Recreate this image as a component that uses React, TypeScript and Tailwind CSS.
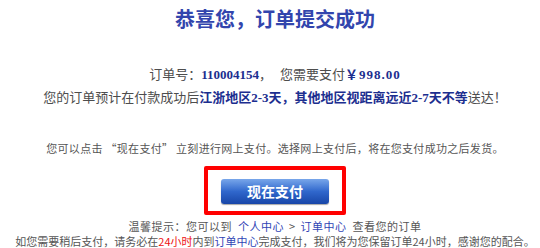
export default function App() {
  const cjk = { fontFamily: '"Noto Sans CJK SC", sans-serif' };

  return (
    <div className="w-[540px] h-[248px] bg-white overflow-hidden pl-[10px] text-center" style={cjk}>
      <h1 className="mt-[9px] text-[20px] leading-[20px] font-bold text-[#3245ad]">
        恭喜您，订单提交成功
      </h1>

      <p className="mt-[34px] text-[13px] leading-[22px] text-[#4d4d4d]">
        订单号：
        <b className="text-[#1c2e8f] font-[Liberation_Serif,Noto_Sans_CJK_SC,serif]">110004154</b>
        ，<span className="ml-[8px]">您需要支付</span>
        <b className="text-[#1c2e8f] font-[Liberation_Serif,Noto_Sans_CJK_SC,serif] tracking-[1px]">￥998.00</b>
      </p>
      <p className="text-[13px] leading-[22px] text-[#4d4d4d] whitespace-nowrap">
        您的订单预计在付款成功后
        <b className="text-[#1c2e8f] font-[Liberation_Serif,Noto_Sans_CJK_SC,serif]">
          江浙地区2-3天，其他地区视距离远近2-7天不等
        </b>
        送达！
      </p>

      <p className="mt-[31px] text-[11px] leading-[16px] tracking-[0.3px] text-[#555]">
        您可以点击 “现在支付” 立刻进行网上支付。选择网上支付后，将在您支付成功之后发货。
      </p>

      <div className="mt-[10px] flex justify-center">
        <div className="border-[4px] border-[#ff0000] rounded-[2px] px-[13px] pt-[8px] pb-[7px]">
          <button className="w-[108px] h-[25px] rounded-[3px] bg-gradient-to-b from-[#78a6ea] via-[#3067cc] to-[#1846a8] text-white text-[14px] font-bold leading-[25px] shadow-[0_1px_1px_rgba(0,0,0,0.35)]">
            现在支付
          </button>
        </div>
      </div>

      <p className="mt-[3px] text-[11px] leading-[16px] tracking-[0.5px] text-[#555]">
        温馨提示：您可以到 <span className="ml-[3px] text-[#2f44b5]">个人中心</span>
        <span className="mx-[5px]">&gt;</span>
        <span className="text-[#2f44b5]">订单中心</span>
        <span className="ml-[6px]">查看您的订单</span>
      </p>
      <p className="text-[11px] leading-[14px] text-[#555] whitespace-nowrap">
        如您需要稍后支付，请务必在<span className="text-[#ee1111]">24小时</span>内到
        <span className="text-[#2f44b5]">订单中心</span>完成支付，我们将为您保留订单24小时，感谢您的配合。
      </p>
    </div>
  );
}
